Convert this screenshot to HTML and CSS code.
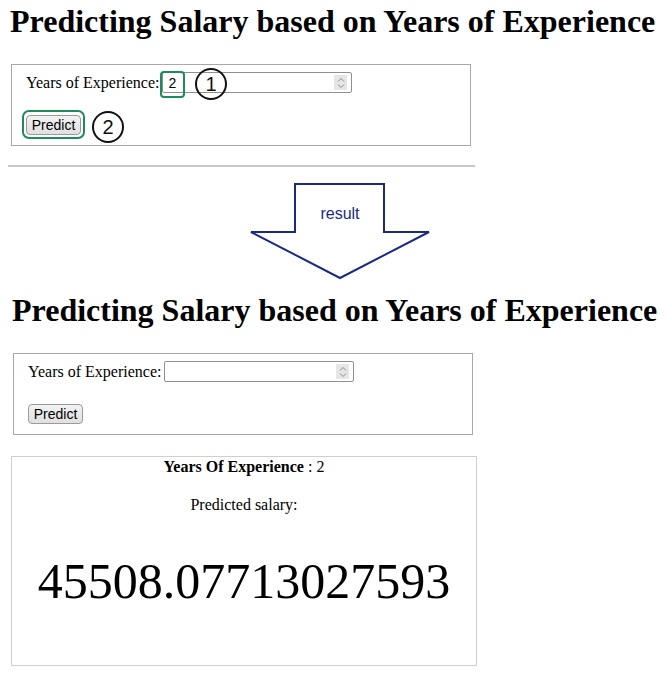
FILE: index.html
```html
<!DOCTYPE html>
<html>
<head>
<meta charset="utf-8">
<link rel="stylesheet" href="styles.css">
</head>
<body>
<section class="shot shot-before">
  <h1 class="title">Predicting Salary based on Years of Experience</h1>
  <form class="form-box">
    <div class="row">
      <label class="label">Years of Experience:</label>
      <div class="num-input"><span class="num-value">2</span><span class="spin"><svg width="8" height="12" viewBox="0 0 8 12"><path d="M1 4.5 L4 1.5 L7 4.5 M1 7.5 L4 10.5 L7 7.5" fill="none" stroke="#8a8a8a" stroke-width="1"/></svg></span></div>
    </div>
    <button type="button" class="btn">Predict</button>
    <span class="mark mark-input"></span>
    <span class="mark mark-btn"></span>
    <span class="badge badge-1">1</span>
    <span class="badge badge-2">2</span>
  </form>
  <hr class="divider">
</section>

<div class="arrow-wrap">
  <svg class="arrow" width="182" height="98" viewBox="0 0 182 98">
    <path d="M45 2 H134 V50 H179 L90 96 L1 50 H45 Z" fill="none" stroke="#1b2a84" stroke-width="2" stroke-linejoin="miter"/>
    <text x="90" y="37" text-anchor="middle" class="arrow-text">result</text>
  </svg>
</div>

<section class="shot shot-after">
  <h1 class="title title-2">Predicting Salary based on Years of Experience</h1>
  <form class="form-box form-box-2">
    <div class="row">
      <label class="label">Years of Experience:</label>
      <div class="num-input"><span class="num-value"></span><span class="spin"><svg width="8" height="12" viewBox="0 0 8 12"><path d="M1 4.5 L4 1.5 L7 4.5 M1 7.5 L4 10.5 L7 7.5" fill="none" stroke="#8a8a8a" stroke-width="1"/></svg></span></div>
    </div>
    <button type="button" class="btn">Predict</button>
  </form>
  <div class="result-box">
    <p class="res-years"><b>Years Of Experience</b> : 2</p>
    <p class="res-label">Predicted salary:</p>
    <p class="res-value">45508.07713027593</p>
  </div>
</section>
</body>
</html>
```

FILE: styles.css
```css
html, body {
  margin: 0;
  padding: 0;
  background: #fff;
}
body {
  font-family: "Liberation Serif", "Times New Roman", serif;
  color: #000;
  width: 666px;
  height: 676px;
  overflow: hidden;
}
.shot-before {
  padding-top: 5px;
}
.title {
  margin: 0 0 0 10px;
  font-size: 32px;
  line-height: 32px;
  font-weight: bold;
  white-space: nowrap;
}
.form-box {
  position: relative;
  box-sizing: border-box;
  margin: 27px 0 0 11px;
  width: 460px;
  height: 82px;
  border: 1px solid #a8a8a8;
  padding: 7px 0 0 14px;
}
.row {
  display: flex;
  align-items: center;
  height: 21px;
}
.label {
  font-size: 16px;
  margin-right: 3px;
}
.num-input {
  box-sizing: border-box;
  width: 190px;
  height: 21px;
  border: 1px solid #8f8f8f;
  border-radius: 2px;
  display: flex;
  align-items: center;
  justify-content: space-between;
  padding: 0 4px 0 5px;
  background: #fff;
}
.num-value {
  font-family: "Liberation Sans", Arial, sans-serif;
  font-size: 14px;
}
.spin {
  width: 13px;
  height: 15px;
  background: #e6e6e6;
  display: flex;
  align-items: center;
  justify-content: center;
}
.btn {
  display: block;
  margin: 22px 0 0 0;
  box-sizing: border-box;
  width: 55px;
  height: 20px;
  padding: 0;
  font-family: "Liberation Sans", Arial, sans-serif;
  font-size: 14px;
  color: #000;
  background: linear-gradient(#f2f2f2, #e0e0e0);
  border: 1px solid #9a9a9a;
  border-radius: 4px;
}
.mark {
  position: absolute;
  box-sizing: border-box;
  border: 2px solid #1f8a5e;
}
.mark-input {
  left: 148px;
  top: 6px;
  width: 25px;
  height: 27px;
  border-radius: 4px;
}
.mark-btn {
  left: 10px;
  top: 45px;
  width: 63px;
  height: 29px;
  border-radius: 7px;
}
.badge {
  position: absolute;
  box-sizing: border-box;
  width: 32px;
  height: 32px;
  border: 2px solid #111;
  border-radius: 50%;
  display: flex;
  align-items: center;
  justify-content: center;
  font-family: "Liberation Sans", Arial, sans-serif;
  font-size: 20px;
  color: #111;
}
.badge-1 {
  left: 183px;
  top: 3px;
}
.badge-2 {
  left: 80px;
  top: 46px;
}
.divider {
  margin: 19px 0 0 8px;
  width: 467px;
  height: 0;
  border: 0;
  border-top: 2px solid #c8c8c8;
}
.arrow-wrap {
  display: flex;
  padding: 15px 0 0 250px;
  height: 98px;
}
.arrow-text {
  font-family: "Liberation Sans", Arial, sans-serif;
  font-size: 16px;
  fill: #1b2a84;
}
.title-2 {
  margin: 14px 0 0 12px;
}
.form-box-2 {
  margin: 27px 0 0 13px;
  height: 82px;
}
.result-box {
  box-sizing: border-box;
  margin: 21px 0 0 11px;
  width: 466px;
  height: 210px;
  border: 1px solid #cfcfcf;
  text-align: center;
  font-size: 16px;
}
.res-years {
  margin: 0;
  padding-top: 1px;
  line-height: 18px;
}
.res-label {
  margin: 20px 0 0 0;
  line-height: 18px;
}
.res-value {
  margin: 39px 0 0 0;
  font-size: 50px;
  line-height: 56px;
}
```
